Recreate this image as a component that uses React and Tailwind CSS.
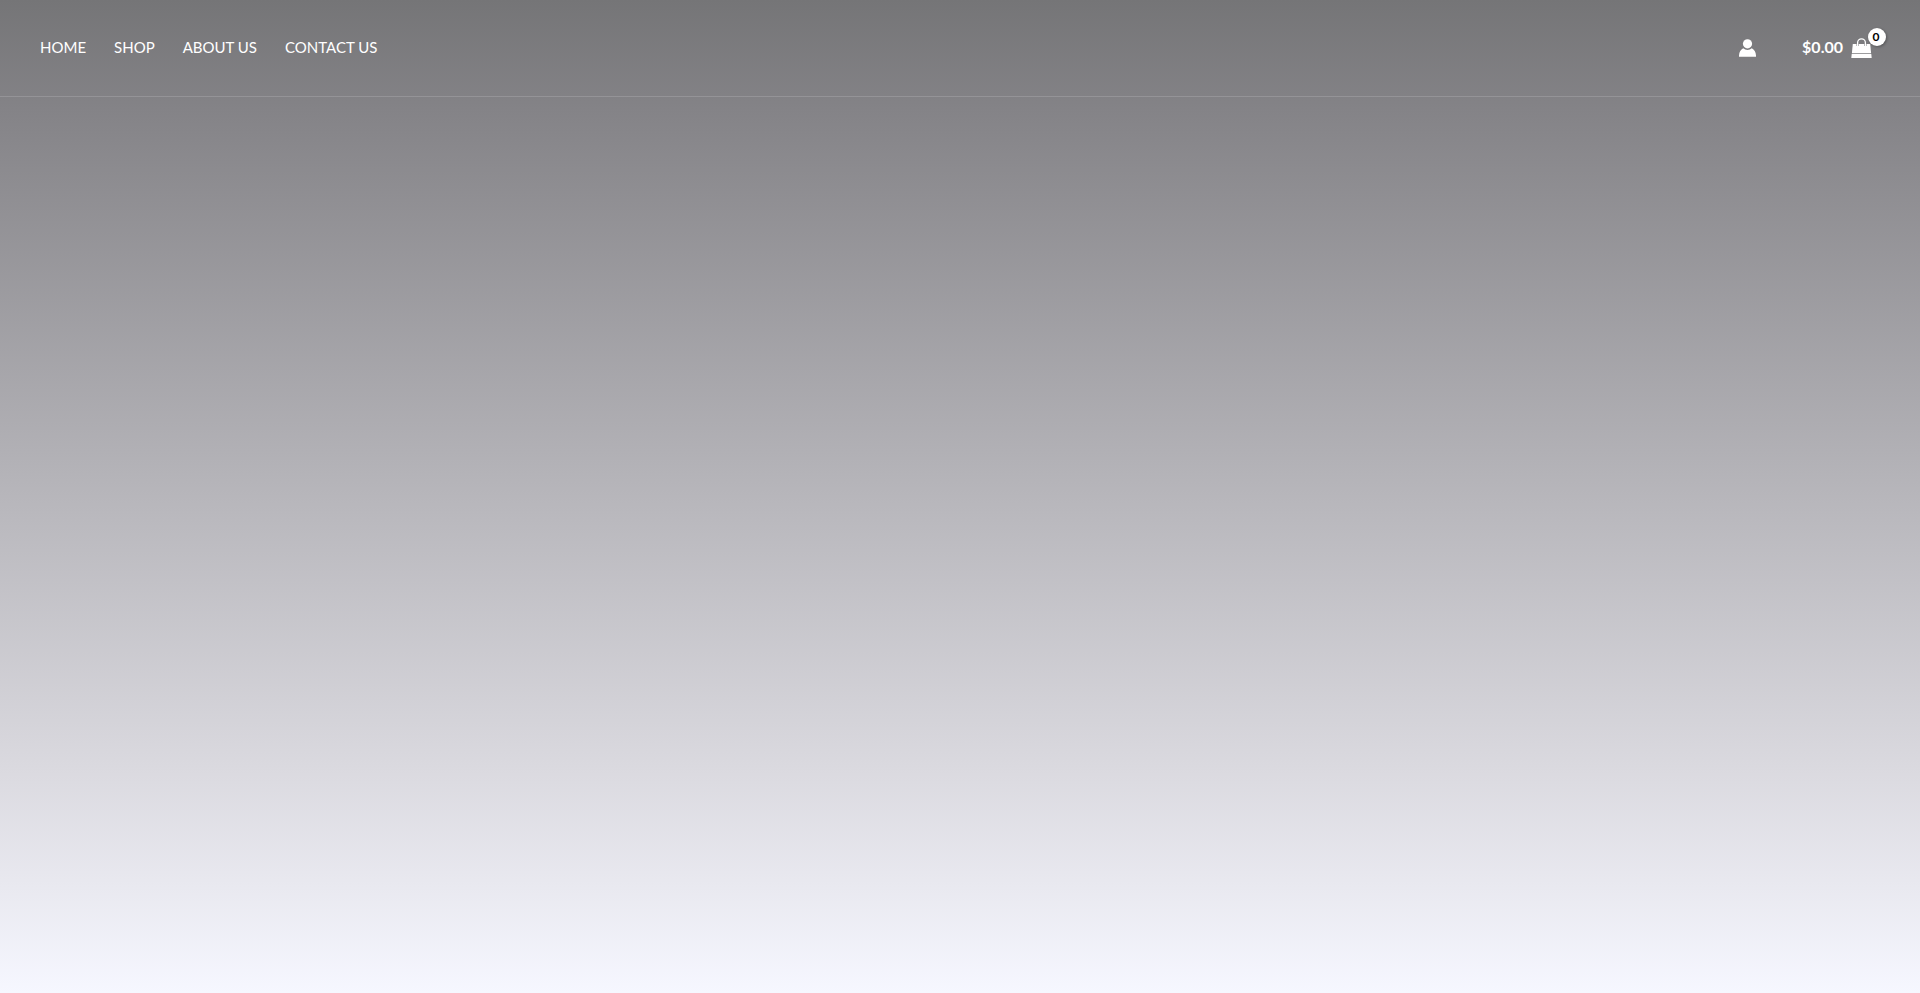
import React from 'react';

const navLinks = [
  { label: 'HOME', href: '#home' },
  { label: 'SHOP', href: '#shop' },
  { label: 'ABOUT US', href: '#about' },
  { label: 'CONTACT US', href: '#contact' },
];

const UserIcon = () => (
  <svg viewBox="0 0 17 18" className="w-[17px] h-[18px]" fill="currentColor" aria-hidden="true">
    <circle cx="8.5" cy="4.8" r="4.6" />
    <path d="M4.2 9.3C1.7 10.6 0.2 12.9 0 16.4v1.3h17v-1.3c-.2-3.5-1.7-5.8-4.2-7.1a6.2 6.2 0 0 1-8.6 0z" />
  </svg>
);

const BagIcon = () => (
  <svg viewBox="0 0 21 20" className="w-[21px] h-5" aria-hidden="true">
    <path d="M1.8 6h17.4l.9 9.2H.9z" fill="currentColor" />
    <path d="M.7 15.9h19.6l.4 4.1H.3z" fill="currentColor" />
    <path d="M6.6 8V5a3.9 3.9 0 0 1 7.8 0v3" fill="none" stroke="#7c7c7e" strokeWidth="2.2" />
    <path d="M6.6 8V4.8a3.9 3.9 0 0 1 7.8 0V8" fill="none" stroke="currentColor" strokeWidth="1.3" />
  </svg>
);

const App = () => {
  const total = 0;
  const itemCount = 0;

  return (
    <div className="min-h-screen bg-[linear-gradient(to_bottom,#757577,#848387_11%,#b7b6bb_50%,#dbdae0_78%,#f6f7ff)] font-['Lato',sans-serif] text-white">
      <header className="flex h-[97px] items-center justify-between border-b border-white/15 px-10">
        <nav aria-label="Main" className="pb-0.5">
          <ul className="flex items-center gap-7 text-[15px] leading-6">
            {navLinks.map((link) => (
              <li key={link.label}>
                <a href={link.href} className="hover:underline">{link.label}</a>
              </li>
            ))}
          </ul>
        </nav>

        <div className="flex items-center gap-[46px] pr-2">
          <a href="#account" aria-label="Account">
            <UserIcon />
          </a>

          <a href="#cart" aria-label="View cart" className="flex items-center gap-2 text-base font-bold">
            <span className="pb-0.5">${total.toFixed(2)}</span>
            <span className="relative">
              <BagIcon />
              <span className="absolute -top-2.5 left-[17px] flex size-[18px] items-center justify-center rounded-full bg-white pr-0.5 text-xs text-black shadow-[1px_1px_3px_rgba(0,0,0,0.3)]">
                {itemCount}
              </span>
            </span>
          </a>
        </div>
      </header>
    </div>
  );
};

export default App;
